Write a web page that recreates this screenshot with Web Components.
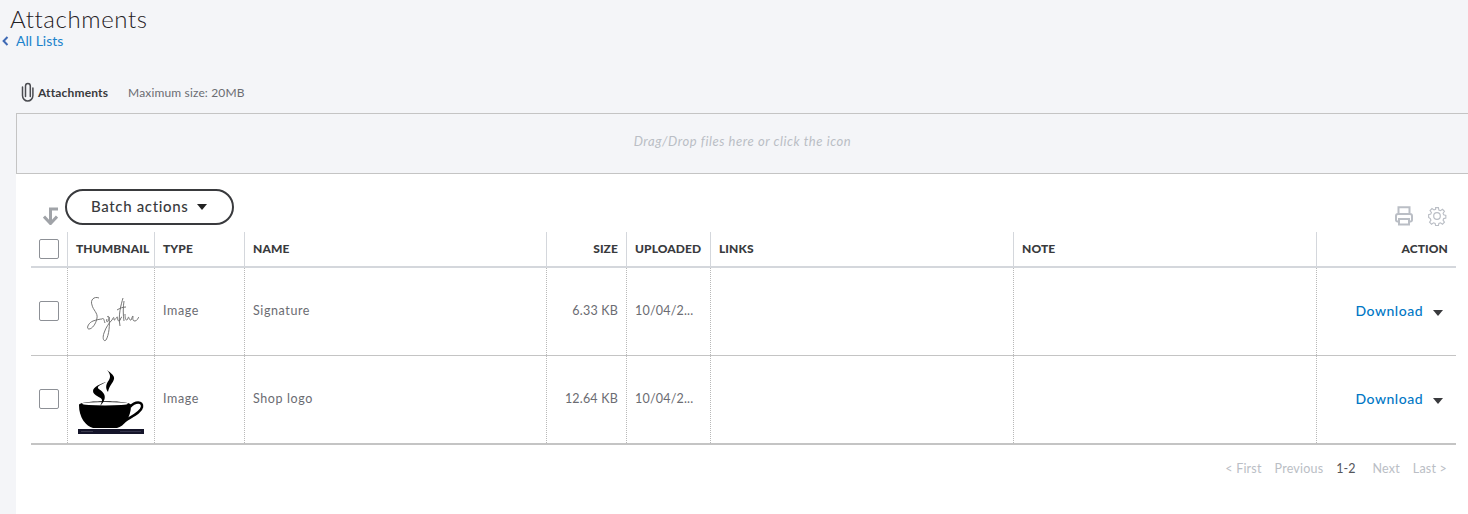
<!DOCTYPE html>
<html>
<head>
<meta charset="utf-8">
<title>Attachments</title>
<style>
  html, body { margin: 0; height: 100%; }
  body { background: #f4f5f8; font-family: Lato, "Open Sans", sans-serif; color: #393a3d; overflow: hidden; }
</style>
</head>
<body>
<list-header title-text="Attachments" back-text="All Lists"></list-header>
<attach-zone></attach-zone>
<list-panel>
  <batch-bar></batch-bar>
  <att-table>
    <att-row head>
      <att-cell><att-check></att-check></att-cell>
      <att-cell>THUMBNAIL</att-cell>
      <att-cell>TYPE</att-cell>
      <att-cell>NAME</att-cell>
      <att-cell align="right">SIZE</att-cell>
      <att-cell>UPLOADED</att-cell>
      <att-cell>LINKS</att-cell>
      <att-cell>NOTE</att-cell>
      <att-cell align="right">ACTION</att-cell>
    </att-row>
    <att-row>
      <att-cell><att-check></att-check></att-cell>
      <att-cell flush><sig-thumb></sig-thumb></att-cell>
      <att-cell>Image</att-cell>
      <att-cell>Signature</att-cell>
      <att-cell align="right" tight>6.33 KB</att-cell>
      <att-cell tight>10/04/2...</att-cell>
      <att-cell></att-cell>
      <att-cell></att-cell>
      <att-cell align="right"><row-action></row-action></att-cell>
    </att-row>
    <att-row last>
      <att-cell><att-check></att-check></att-cell>
      <att-cell flush><cup-thumb></cup-thumb></att-cell>
      <att-cell>Image</att-cell>
      <att-cell>Shop logo</att-cell>
      <att-cell align="right" tight>12.64 KB</att-cell>
      <att-cell tight>10/04/2...</att-cell>
      <att-cell></att-cell>
      <att-cell></att-cell>
      <att-cell align="right"><row-action></row-action></att-cell>
    </att-row>
  </att-table>
  <page-nav></page-nav>
</list-panel>

<script>
function shadow(el, html) {
    el.attachShadow({ mode: 'open' });
    el.shadowRoot.innerHTML = html;
}

class ListHeader extends HTMLElement {
    connectedCallback() {
        shadow(this, `
            <style>
                :host { display: block; height: 113px; }
                h1 { margin: 0; padding: 4px 0 0 10px; font-size: 24px; line-height: 29px; font-weight: 300; letter-spacing: .6px; color: #1f2024; }
                .back { display: flex; align-items: center; height: 15px; padding-left: 2px; gap: 7px; font-size: 14px; color: #1b83cc; }
                .row { display: flex; align-items: center; height: 20px; margin-top: 34px; padding-left: 21px; font-size: 12px; }
                .row b { font-weight: 700; margin-left: 3px; color: #393a3d; letter-spacing: .15px; }
                .row span { margin-left: 20px; color: #6b6c72; letter-spacing: .15px; }
            </style>
            <h1>${this.getAttribute('title-text')}</h1>
            <div class="back">
                <svg width="7" height="10" viewBox="0 0 7 10"><path d="M5.500 1 1.600 5l3.900 4" fill="none" stroke="#3f6ab5" stroke-width="2"/></svg>
                <span>${this.getAttribute('back-text')}</span>
            </div>
            <div class="row">
                <svg width="14" height="20" viewBox="0 0 14 20" fill="none" stroke="#4a4b50" stroke-width="1.500" stroke-linecap="round"><path d="M1.500 5v8.500a5.200 5.500 0 0 0 10.400 0V6"/><path d="M4.500 14.500V4a2.400 2.600 0 0 1 4.800 0v10.500"/></svg>
                <b>Attachments</b>
                <span>Maximum size: 20MB</span>
            </div>
        `);
    }
}

class AttachZone extends HTMLElement {
    connectedCallback() {
        shadow(this, `
            <style>
                :host { display: flex; align-items: center; justify-content: center; box-sizing: border-box; height: 61px; margin-left: 16px; padding-bottom: 5px; border: 1px solid #c4c4c4; border-right: 0; font-size: 13px; font-style: italic; color: #babec5; letter-spacing: .55px; }
            </style>
            Drag/Drop files here or click the icon
        `);
    }
}

class ListPanel extends HTMLElement {
    connectedCallback() {
        shadow(this, `
            <style>
                :host { display: block; margin-left: 16px; padding: 15px 12px 0 15px; height: 340px; box-sizing: border-box; background: #fff; }
            </style>
            <slot></slot>
        `);
    }
}

class BatchBar extends HTMLElement {
    connectedCallback() {
        shadow(this, `
            <style>
                :host { display: flex; height: 43px; align-items: flex-start; }
                .sort { margin: 18px 7px 0 12px; width: 15px; height: 18px; }
                button { display: flex; align-items: center; box-sizing: border-box; width: 169px; height: 36px; padding: 0 0 2px 24px; border: 2px solid #393a3d; border-radius: 18px; background: #fff; font: 500 15px Lato, sans-serif; color: #393a3d; letter-spacing: .65px; }
                i { margin: 2px 0 0 9px; border: 5px solid transparent; border-top: 6px solid #222; border-bottom: 0; }
                .tools { margin-left: auto; margin-top: 17px; margin-right: 9px; display: flex; gap: 14px; }
            </style>
            <svg class="sort" viewBox="0 0 15 18"><path d="M15 2H7.500v14M1 9.500l6.500 7 6.500-7" fill="none" stroke="#a0a3a8" stroke-width="3"/></svg>
            <button>Batch actions<i></i></button>
            <div class="tools">
                <svg width="18" height="20" viewBox="0 0 18 20" fill="none" stroke="#babec5" stroke-width="2"><path d="M3.500 7V1.200h11V7"/><path d="M4 15.500H2.500A1.500 1.500 0 0 1 1 14v-4A2 2 0 0 1 3 8h12a2 2 0 0 1 2 2v4a1.500 1.500 0 0 1-1.500 1.500H14"/><path d="M3 13h12" /><path d="M4 13v5.500h10V13"/></svg>
                <svg width="20" height="20" viewBox="0 0 20 20" fill="none" stroke="#babec5" stroke-width="1.200"><circle cx="10" cy="10" r="3.300"/><path d="M8.500 1h3l.5 2.600 1.700.7 2.200-1.500 2.100 2.100-1.500 2.200.7 1.700 2.300.5v3l-2.300.5-.7 1.700 1.500 2.200-2.100 2.100-2.200-1.500-1.700.7-.5 2.300h-3l-.5-2.300-1.700-.7-2.200 1.500-2.100-2.100 1.500-2.200-.7-1.700L1 11.500v-3l2.300-.5.7-1.700-1.500-2.200 2.100-2.100 2.200 1.500 1.700-.7z" transform="translate(10 10) scale(.93) translate(-10 -10)"/></svg>
            </div>
        `);
    }
}

class AttTable extends HTMLElement {
    connectedCallback() {
        shadow(this, `
            <style>
                :host { display: block; --cols: 36px 87px 90px 302px 80px 84px 303px 303px 140px; }
            </style>
            <slot></slot>
        `);
    }
}

class AttRow extends HTMLElement {
    connectedCallback() {
        shadow(this, `
            <style>
                :host { display: grid; grid-template-columns: var(--cols); height: 88px; box-sizing: border-box; border-bottom: 1px solid #c4c4c4; --line: 1px dotted #b8b8b8; --text-drop: 2px; --check-drop: 2px; }
                :host([head]) { height: 36px; border-bottom: 2px solid #d4d7dc; font-weight: 900; font-size: 12px; letter-spacing: .1px; --line: 1px solid #d4d7dc; --check-drop: 0px; }
                :host([last]) { height: 89px; border-bottom: 2px solid #c4c4c4; --check-drop: 1px; }
                :host(:not([head])) { font-size: 12.500px; color: #6b6c72; letter-spacing: .6px; }
            </style>
            <slot></slot>
        `);
    }
}

class AttCell extends HTMLElement {
    connectedCallback() {
        shadow(this, `
            <style>
                :host { display: flex; align-items: center; box-sizing: border-box; padding: 0 8px var(--text-drop) 8px; white-space: nowrap; overflow: hidden; }
                :host(:first-child) { padding-bottom: var(--check-drop); }
                :host(:not(:first-child)) { border-left: var(--line); }
                :host([align=right]) { justify-content: flex-end; }
                :host([tight]) { letter-spacing: .2px; }
                :host([flush]) { padding: 0; justify-content: center; }
            </style>
            <slot></slot>
        `);
    }
}

class AttCheck extends HTMLElement {
    connectedCallback() {
        shadow(this, `
            <style>
                :host { display: block; box-sizing: border-box; width: 20px; height: 20px; border: 1px solid #8d9096; border-radius: 2px; background: #fff; }
            </style>
        `);
    }
}

class SigThumb extends HTMLElement {
    connectedCallback() {
        shadow(this, `
            <style>:host { display: block; width: 52px; height: 48px; margin: 18px 0 0 3px; }</style>
            <svg width="52" height="48" viewBox="0 0 52 48" fill="none" stroke="#666" stroke-width=".9" style="filter: blur(.25px)">
                <path d="M12 1C7-1 3 3 5 8 6 13 11 16 10 21 9 27 5 32 2 32-1 32 1 26 6 24 9 23 13 22 15 22"/>
                <path d="M15 22C17 20 17 24 18 26M20 20C22 18 23 21 21 24 20 26 19 24 20 22M22 20C23 28 22 38 19 43 17 45 15 42 17 36 19 30 22 26 25 23 26 21 27 19 27 22 27 25 29 21 30 20 31 19 30 24 32 24 34 24 33 20 35 20"/>
                <path d="M36 1C34 8 31 18 33 29M30 13C33 11 36 10 39 10M37 4C36 10 36 18 37 24"/>
                <path d="M38 17C38 23 40 25 41 21 42 18 42 24 44 23 45 22 45 19 46 19 46 21 45 24 48 24 50 24 51 21 52 20"/>
            </svg>
        `);
    }
}

class CupThumb extends HTMLElement {
    connectedCallback() {
        shadow(this, `
            <style>:host { display: block; width: 66px; height: 65px; margin-top: 5px; }</style>
            <svg width="66" height="65" viewBox="0 0 66 65">
                <path d="M1 35C1 30 53 30 53 35 53 48 46 56 39 58H15C8 56 1 48 1 35Z" fill="#000"/>
                <ellipse cx="27" cy="33.800" rx="23" ry="1.700" fill="#fff"/>
                <path d="M52 37C57 31 65 31 64 37 63 43 52 47 44 53" fill="none" stroke="#000" stroke-width="2.500"/>
                <path d="M29 0C33 3 37 6 36 9 35 13 31 16 30 22 27 18 28 14 31 10 33 7 32 3 29 0Z" fill="#000"/>
                <path d="M28 12C22 14 15 17 15 21 15 26 24 27 24 30 24 32 23 34 22 36 26 32 28 28 26 24 24 20 19 19 20 17 21 15 25 14 28 12Z" fill="#000"/>
                <rect x="0" y="59" width="66" height="5" fill="#15152a"/>
                <rect x="3" y="61" width="12" height="1" fill="#3a3a4c"/>
                <rect x="42" y="61" width="21" height="1" fill="#33334a"/>
            </svg>
        `);
    }
}

class RowAction extends HTMLElement {
    connectedCallback() {
        shadow(this, `
            <style>
                :host { display: flex; align-items: center; font-size: 14px; font-weight: 500; color: #0077c5; letter-spacing: .5px; margin-right: 5px; }
                i { margin-left: 10px; margin-top: 4px; border: 5px solid transparent; border-top: 6px solid #393a3d; border-bottom: 0; }
            </style>
            Download<i></i>
        `);
    }
}

class PageNav extends HTMLElement {
    connectedCallback() {
        shadow(this, `
            <style>
                :host { display: flex; justify-content: flex-end; align-items: center; height: 18px; margin-top: 14px; padding-right: 9px; font-size: 12.500px; color: #babec5; letter-spacing: .2px; }
                span { margin-left: 13px; }
                .cur { margin: 0 17px 0 13px; color: #55565b; letter-spacing: 0; }
            </style>
            <span>&lt; First</span><span>Previous</span><span class="cur">1-2</span><span style="margin-left:0">Next</span><span>Last &gt;</span>
        `);
    }
}

customElements.define('list-header', ListHeader);
customElements.define('attach-zone', AttachZone);
customElements.define('list-panel', ListPanel);
customElements.define('batch-bar', BatchBar);
customElements.define('att-table', AttTable);
customElements.define('att-row', AttRow);
customElements.define('att-cell', AttCell);
customElements.define('att-check', AttCheck);
customElements.define('sig-thumb', SigThumb);
customElements.define('cup-thumb', CupThumb);
customElements.define('row-action', RowAction);
customElements.define('page-nav', PageNav);
</script>
</body>
</html>
